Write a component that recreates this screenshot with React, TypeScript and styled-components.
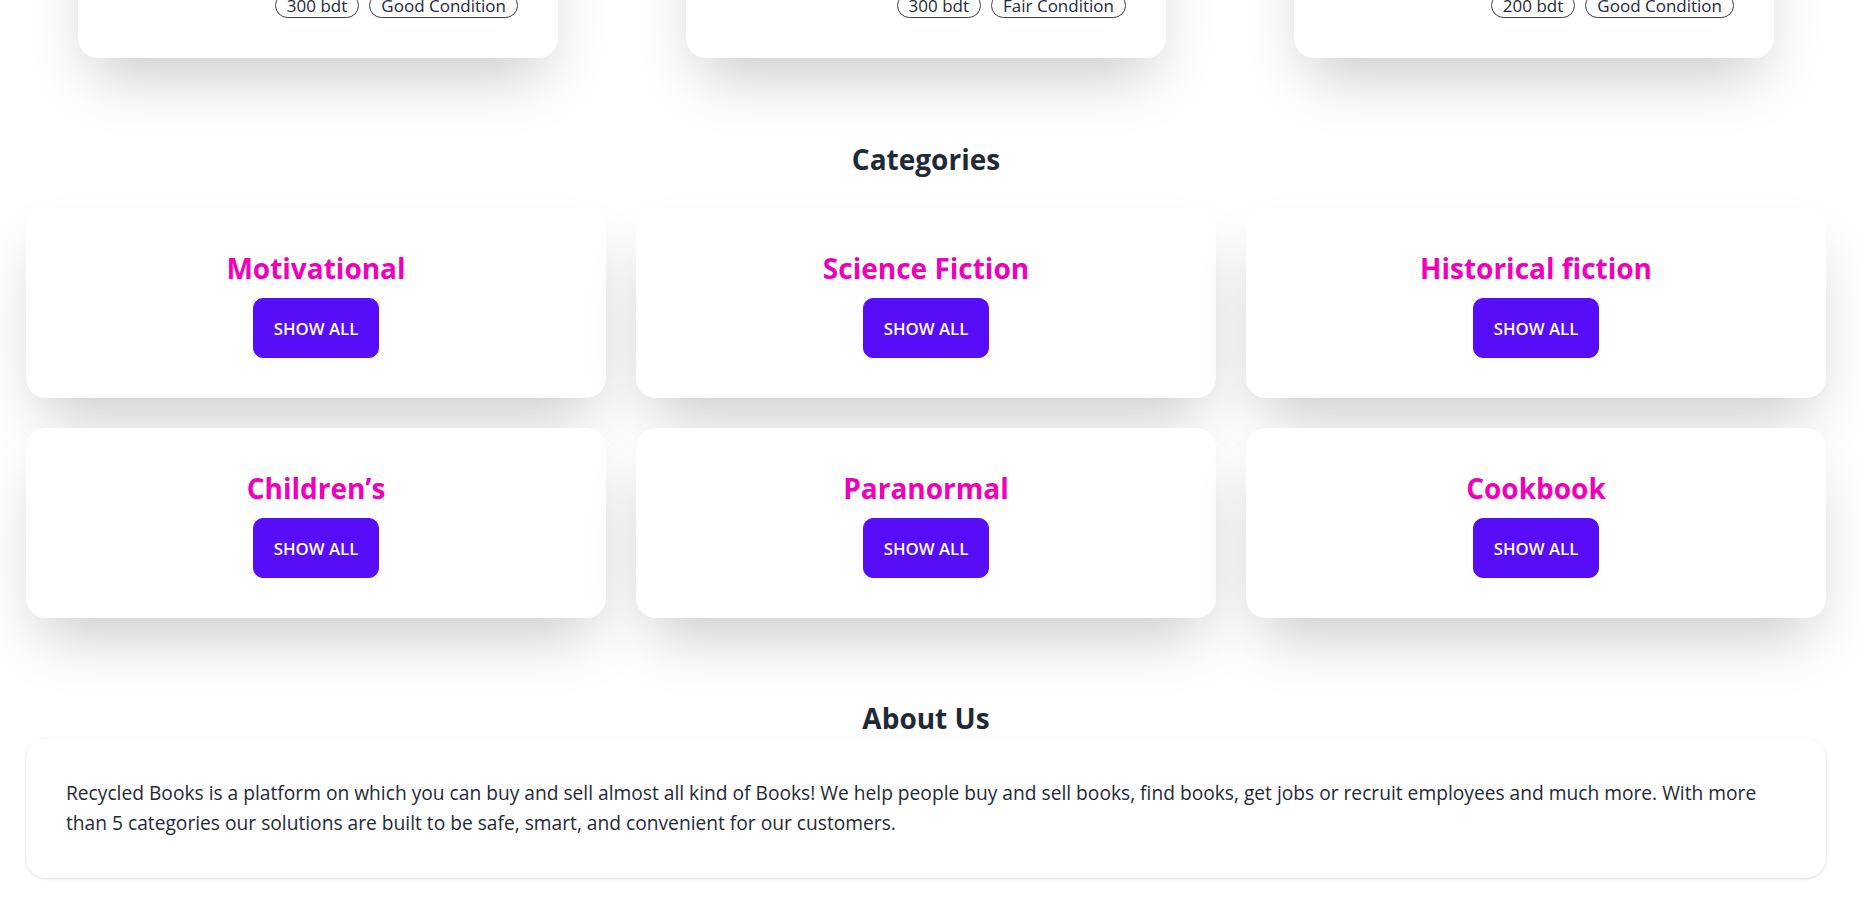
import React from "react";
import styled, { createGlobalStyle } from "styled-components";

const GlobalStyle = createGlobalStyle`
  html, body {
    margin: 0;
    padding: 0;
    background: #ffffff;
  }
  body {
    font-family: "Open Sans", "Noto Sans", "Liberation Sans", sans-serif;
    color: #1f2937;
  }
  * {
    box-sizing: border-box;
  }
`;

interface Book {
  title: string;
  price: string;
  condition: string;
}

const books: Book[] = [
  { title: "The Alchemist", price: "300 bdt", condition: "Good Condition" },
  { title: "Dune", price: "300 bdt", condition: "Fair Condition" },
  { title: "The Book Thief", price: "200 bdt", condition: "Good Condition" },
];

const categories = [
  "Motivational",
  "Science Fiction",
  "Historical fiction",
  "Children\u2019s",
  "Paranormal",
  "Cookbook",
];

const Page = styled.main`
  width: 1800px;
  margin-left: 26px;
  padding-bottom: 44px;
`;

// the view is scrolled: the book cards start above the window
const BookGrid = styled.section`
  display: grid;
  grid-template-columns: repeat(3, 480px);
  column-gap: 128px;
  justify-content: center;
  margin-top: -95px;
`;

const BookCard = styled.div`
  background: #ffffff;
  border-radius: 20px;
  padding: 40px;
  display: flex;
  flex-direction: column;
  gap: 10px;
  box-shadow: 0 31px 62px -15px rgba(0, 0, 0, 0.22);
`;

const BookTitle = styled.h2`
  margin: 0;
  font-size: 25px;
  line-height: 37.5px;
  font-weight: 600;
`;

const TagRow = styled.div`
  display: flex;
  justify-content: flex-end;
  gap: 10px;
`;

const Tag = styled.span`
  display: inline-flex;
  align-items: center;
  height: 25px;
  padding: 0 11px;
  border: 1px solid #374151;
  border-radius: 999px;
  font-size: 17px;
  line-height: 25px;
  color: #1f2937;
`;

const SectionTitle = styled.h2<{ $top: number; $bottom: number }>`
  margin: ${({ $top }) => $top}px 0 ${({ $bottom }) => $bottom}px;
  text-align: center;
  font-size: 28px;
  line-height: 37.5px;
  font-weight: 700;
  color: #1f2937;
`;

const CategoryGrid = styled.section`
  display: grid;
  grid-template-columns: repeat(3, 1fr);
  gap: 30px;
`;

const CategoryCard = styled.div`
  background: #ffffff;
  border-radius: 20px;
  padding: 40px;
  display: flex;
  flex-direction: column;
  align-items: center;
  gap: 10px;
  box-shadow: 0 31px 62px -15px rgba(0, 0, 0, 0.22);
`;

const CategoryName = styled.h3`
  margin: 0;
  font-size: 28px;
  line-height: 40px;
  font-weight: 700;
  color: #f000b8;
`;

const ShowAllButton = styled.button`
  height: 60px;
  padding: 0 20px;
  border: 1px solid #570df8;
  border-radius: 10px;
  background: #570df8;
  color: #ffffff;
  font-family: inherit;
  font-size: 16.8px;
  font-weight: 600;
  text-transform: uppercase;
  cursor: pointer;
`;

const AboutCard = styled.div`
  background: #ffffff;
  border-radius: 20px;
  padding: 40px;
  box-shadow: 0 0 0 1px rgba(0, 0, 0, 0.02), 0 1px 3px 0 rgba(0, 0, 0, 0.1),
    0 1px 2px -1px rgba(0, 0, 0, 0.1);
`;

const AboutText = styled.p`
  margin: 0;
  font-size: 19.2px;
  line-height: 30px;
  color: #1f2937;
`;

export default function App() {
  return (
    <>
      <GlobalStyle />
      <Page>
        <BookGrid>
          {books.map((b) => (
            <BookCard key={b.title}>
              <BookTitle>{b.title}</BookTitle>
              <TagRow>
                <Tag>{b.price}</Tag>
                <Tag>{b.condition}</Tag>
              </TagRow>
            </BookCard>
          ))}
        </BookGrid>

        <SectionTitle $top={83} $bottom={30}>
          Categories
        </SectionTitle>
        <CategoryGrid>
          {categories.map((c) => (
            <CategoryCard key={c}>
              <CategoryName>{c}</CategoryName>
              <ShowAllButton>Show all</ShowAllButton>
            </CategoryCard>
          ))}
        </CategoryGrid>

        <SectionTitle $top={82} $bottom={0}>
          About Us
        </SectionTitle>
        <AboutCard>
          <AboutText>
            Recycled Books is a platform on which you can buy and sell almost
            all kind of Books! We help people buy and sell books, find books,
            get jobs or recruit employees and much more. With more than 5
            categories our solutions are built to be safe, smart, and
            convenient for our customers.
          </AboutText>
        </AboutCard>
      </Page>
    </>
  );
}
